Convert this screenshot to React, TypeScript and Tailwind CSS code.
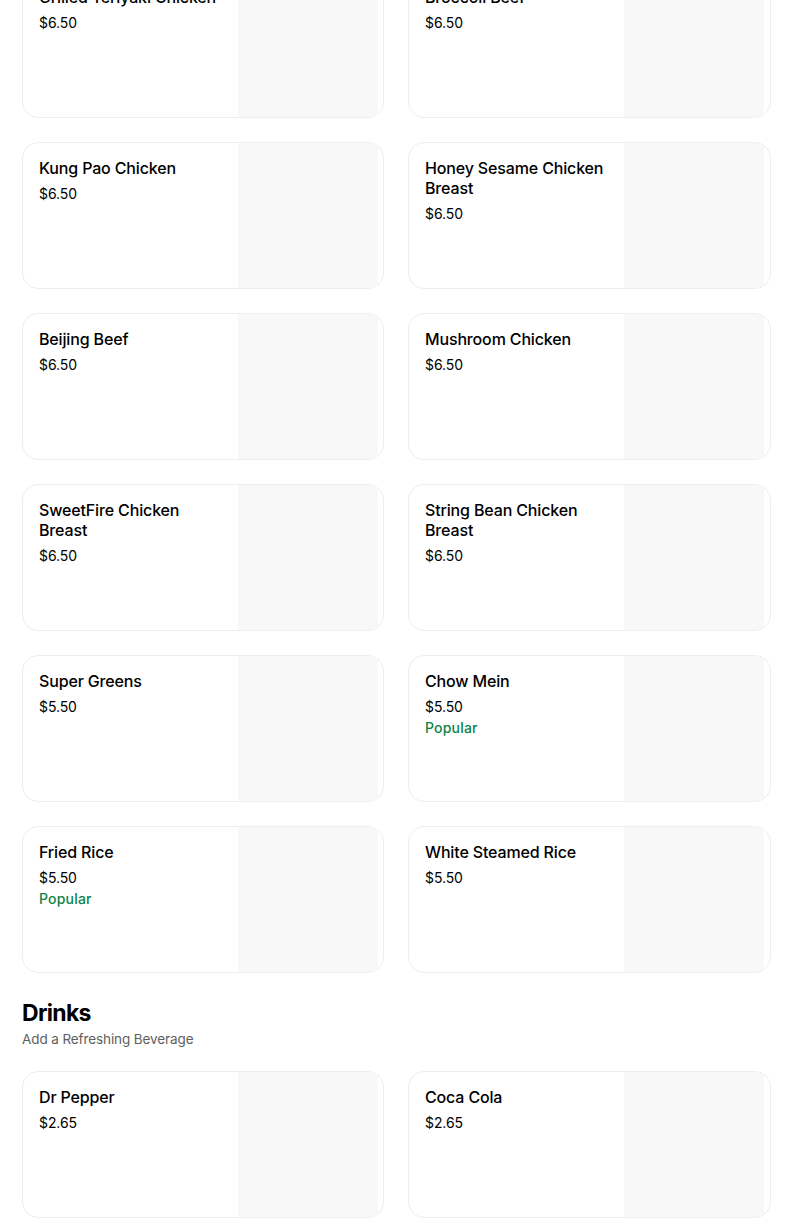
import React from "react";

type Item = { name: string; price: string; popular?: boolean };

const food: Item[] = [
  { name: "Grilled Teriyaki Chicken", price: "$6.50" },
  { name: "Broccoli Beef", price: "$6.50" },
  { name: "Kung Pao Chicken", price: "$6.50" },
  { name: "Honey Sesame Chicken Breast", price: "$6.50" },
  { name: "Beijing Beef", price: "$6.50" },
  { name: "Mushroom Chicken", price: "$6.50" },
  { name: "SweetFire Chicken Breast", price: "$6.50" },
  { name: "String Bean Chicken Breast", price: "$6.50" },
  { name: "Super Greens", price: "$5.50" },
  { name: "Chow Mein", price: "$5.50", popular: true },
  { name: "Fried Rice", price: "$5.50", popular: true },
  { name: "White Steamed Rice", price: "$5.50" },
];

const drinks: Item[] = [
  { name: "Dr Pepper", price: "$2.65" },
  { name: "Coca Cola", price: "$2.65" },
];

function Card({ item }: { item: Item }) {
  return (
    <div className="flex h-[147px] overflow-hidden rounded-2xl border border-[#eeeeee] bg-white">
      <div className="w-[215px] shrink-0 px-4 pt-[15px]">
        <div className="text-[16px] font-medium leading-5 tracking-[-0.15px] text-black">{item.name}</div>
        <div className="mt-[6px] text-[14px] leading-5 tracking-[-0.1px] text-black">{item.price}</div>
        {item.popular && (
          <div className="mt-[1px] text-[14px] font-medium leading-5 tracking-[0.2px] text-[#0e8345]">
            Popular
          </div>
        )}
      </div>
      <div className="w-[140px] shrink-0 bg-[#f8f8f8]" />
      <div className="flex-1" />
    </div>
  );
}

export default function App() {
  return (
    <div
      className="h-[1232px] overflow-hidden bg-white"
      style={{ fontFamily: "Inter, 'Noto Sans', sans-serif" }}
    >
      <div className="-mt-[29px] pl-[22px]">
        <div className="grid grid-cols-[362px_363px] gap-x-6 gap-y-6">
          {food.map((it) => (
            <Card key={it.name} item={it} />
          ))}
        </div>
        <div className="mt-6">
          <h2 className="text-[23px] font-bold leading-8 tracking-[-0.7px] text-black">Drinks</h2>
          <div className="text-[13.5px] leading-5 tracking-[-0.1px] text-[#5e5e5e]">Add a Refreshing Beverage</div>
        </div>
        <div className="mt-[22px] grid grid-cols-[362px_363px] gap-6">
          {drinks.map((it) => (
            <Card key={it.name} item={it} />
          ))}
        </div>
      </div>
    </div>
  );
}
